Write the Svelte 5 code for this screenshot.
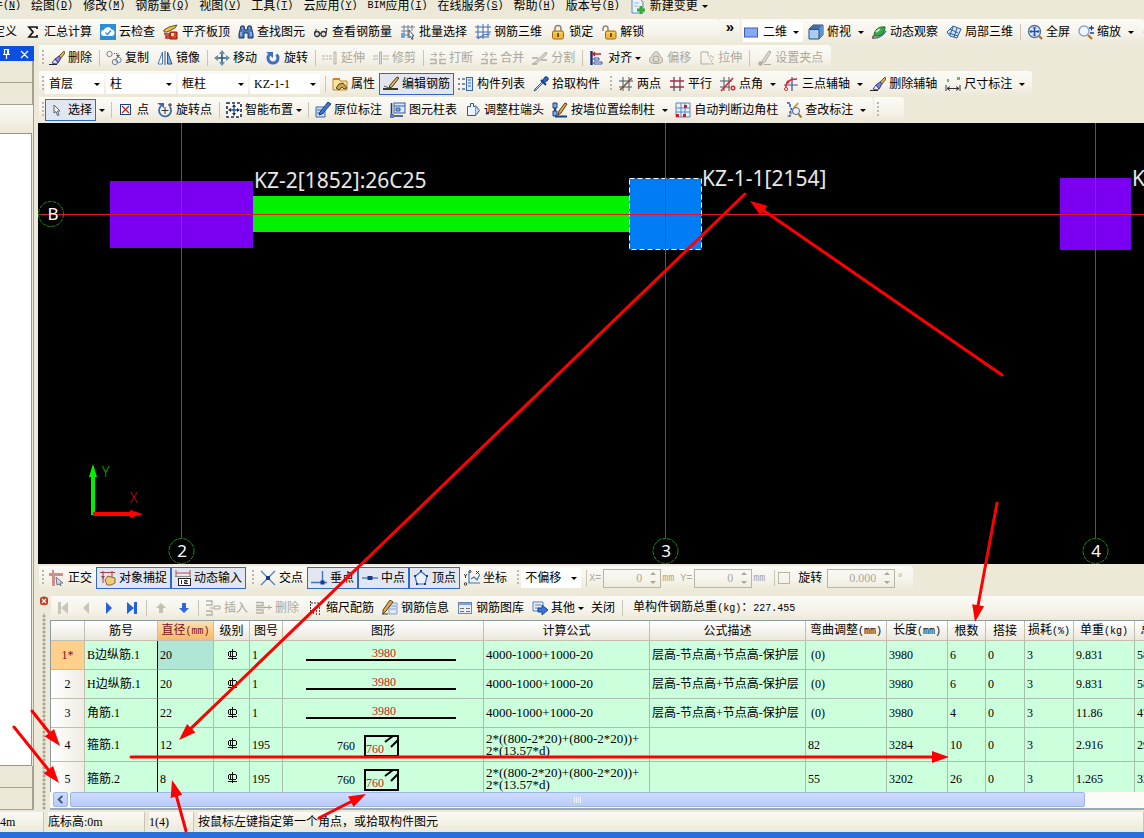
<script lang="ts">
  type Tool = {
    icon?: string;
    label?: string;
    title?: string;
    on?: boolean;
    off?: boolean;
    arrow?: 'menu' | 'split';
    sep?: boolean;
    grip?: boolean;
  };

  const sep: Tool = { sep: true };
  const grip: Tool = { grip: true };

  const menus = [
    ['', '构件', 'N'], ['', '绘图', 'D'], ['', '修改', 'M'], ['', '钢筋量', 'Q'],
    ['', '视图', 'V'], ['', '工具', 'T'], ['', '云应用', 'Y'], ['BIM', '应用', 'I'],
    ['', '在线服务', 'S'], ['', '帮助', 'H'], ['', '版本号', 'B']
  ];

  const mainTools: Tool[] = [
    { label: '定义' },
    { icon: 'sigma', label: '汇总计算' },
    { icon: 'cloud', label: '云检查' },
    { icon: 'slab', label: '平齐板顶' },
    { icon: 'binoculars', label: '查找图元' },
    { icon: 'glasses', label: '查看钢筋量' },
    { icon: 'batch', label: '批量选择' },
    { icon: 'mesh', label: '钢筋三维' },
    { icon: 'lock', label: '锁定' },
    { icon: 'unlock', label: '解锁' }
  ];

  const viewTools: Tool[] = [
    { icon: 'cube', label: '俯视', arrow: 'split' },
    { icon: 'orbit', label: '动态观察' },
    { icon: 'local3d', label: '局部三维' },
    sep,
    { icon: 'fit', label: '全屏' },
    { icon: 'zoom', label: '缩放', arrow: 'split' },
    { icon: 'hand', title: '平移' }
  ];

  const editTools: Tool[] = [
    { icon: 'brush', label: '删除' },
    sep,
    { icon: 'copy', label: '复制' },
    { icon: 'mirror', label: '镜像' },
    sep,
    { icon: 'move', label: '移动' },
    { icon: 'rotate', label: '旋转' },
    sep,
    { icon: 'extend', label: '延伸', off: true },
    { icon: 'trim', label: '修剪', off: true },
    sep,
    { icon: 'break', label: '打断', off: true },
    { icon: 'break', label: '合并', off: true },
    { icon: 'split', label: '分割', off: true },
    sep,
    { icon: 'align', label: '对齐', arrow: 'menu' },
    { icon: 'offset', label: '偏移', off: true },
    { icon: 'stretch', label: '拉伸', off: true },
    sep,
    { icon: 'grips', label: '设置夹点', off: true }
  ];

  const combos = [
    { name: '楼层', value: '首层', size: 'narrow' },
    { name: '构件类型', value: '柱', size: '' },
    { name: '构件种类', value: '框柱', size: '' },
    { name: '构件名称', value: 'KZ-1-1', size: '' }
  ];

  const memberTools: Tool[] = [
    sep,
    { icon: 'props', label: '属性' },
    { icon: 'editbar', label: '编辑钢筋', on: true },
    { icon: 'list', label: '构件列表' },
    { icon: 'picker', label: '拾取构件' },
    grip,
    { icon: 'twopt', label: '两点' },
    { icon: 'parallel', label: '平行' },
    { icon: 'angle', label: '点角', arrow: 'split' },
    { icon: 'threept', label: '三点辅轴', arrow: 'split' },
    { icon: 'brush', label: '删除辅轴' },
    { icon: 'dim', label: '尺寸标注', arrow: 'split' }
  ];

  const drawTools: Tool[] = [
    { icon: 'cursor', label: '选择', on: true, arrow: 'split' },
    sep,
    { icon: 'point', label: '点' },
    { icon: 'rotpoint', label: '旋转点' },
    sep,
    { icon: 'smart', label: '智能布置', arrow: 'menu' },
    sep,
    { icon: 'note', label: '原位标注' },
    { icon: 'coltable', label: '图元柱表' },
    { icon: 'colend', label: '调整柱端头' },
    { icon: 'bywall', label: '按墙位置绘制柱', arrow: 'split' },
    { icon: 'corner', label: '自动判断边角柱' },
    { icon: 'check', label: '查改标注', arrow: 'split' }
  ];

  const snapTools: Tool[] = [
    { icon: 'ortho', label: '正交' },
    { icon: 'snap', label: '对象捕捉', on: true },
    { icon: 'dyn', label: '动态输入', on: true },
    grip,
    { icon: 'cross', label: '交点' },
    { icon: 'perp', label: '垂点', on: true },
    { icon: 'mid', label: '中点', on: true },
    { icon: 'vertex', label: '顶点', on: true },
    { icon: 'coord', label: '坐标' },
    grip
  ];

  const rebarTools: Tool[] = [
    { icon: 'first', title: '首行', off: true },
    { icon: 'prev', title: '上一行', off: true },
    { icon: 'next', title: '下一行' },
    { icon: 'last', title: '末行' },
    sep,
    { icon: 'up', title: '上移', off: true },
    { icon: 'down', title: '下移' },
    sep,
    { icon: 'insert', label: '插入', off: true },
    { icon: 'remove', label: '删除', off: true },
    { icon: 'scale', label: '缩尺配筋' },
    { icon: 'info', label: '钢筋信息' },
    { icon: 'library', label: '钢筋图库' },
    { icon: 'other', label: '其他', arrow: 'menu' },
    { label: '关闭' },
    sep
  ];

  const columns = [
    { label: '', unit: '', cls: 'c-index' },
    { label: '筋号', unit: '', cls: 'c-name' },
    { label: '直径', unit: '(mm)', cls: 'c-dia' },
    { label: '级别', unit: '', cls: 'c-grade' },
    { label: '图号', unit: '', cls: 'c-fig' },
    { label: '图形', unit: '', cls: 'c-shape' },
    { label: '计算公式', unit: '', cls: 'c-formula' },
    { label: '公式描述', unit: '', cls: 'c-desc' },
    { label: '弯曲调整', unit: '(mm)', cls: 'c-bend' },
    { label: '长度', unit: '(mm)', cls: 'c-len' },
    { label: '根数', unit: '', cls: 'c-count' },
    { label: '搭接', unit: '', cls: 'c-lap' },
    { label: '损耗', unit: '(%)', cls: 'c-loss' },
    { label: '单重', unit: '(kg)', cls: 'c-weight' },
    { label: '总重', unit: '(kg)', cls: 'c-total' }
  ];

  const straight = '4000-1000+1000-20';
  const desc = '层高-节点高+节点高-保护层';
  const hoop = '2*((800-2*20)+(800-2*20))+\n2*(13.57*d)';

  const rows = [
    { name: 'B边纵筋.1', dia: 20, fig: 1, formula: straight, desc, bend: '(0)', len: 3980, count: 6, lap: 0, loss: 3, weight: '9.831', total: '58.986' },
    { name: 'H边纵筋.1', dia: 20, fig: 1, formula: straight, desc, bend: '(0)', len: 3980, count: 6, lap: 0, loss: 3, weight: '9.831', total: '58.986' },
    { name: '角筋.1', dia: 22, fig: 1, formula: straight, desc, bend: '(0)', len: 3980, count: 4, lap: 0, loss: 3, weight: '11.86', total: '47.44' },
    { name: '箍筋.1', dia: 12, fig: 195, formula: hoop, desc: '', bend: '82', len: 3284, count: 10, lap: 0, loss: 3, weight: '2.916', total: '29.16' },
    { name: '箍筋.2', dia: 8, fig: 195, formula: hoop, desc: '', bend: '55', len: 3202, count: 26, lap: 0, loss: 3, weight: '1.265', total: '32.89' }
  ];

  // start x, start y, tip x, tip y
  const marks = [
    [745, 194, 179, 740],
    [1002, 375, 750, 201],
    [997, 503, 975, 622],
    [32, 711, 60, 746],
    [14, 727, 59, 783],
    [131, 757, 949, 757],
    [186, 831, 172, 780],
    [319, 818, 366, 794]
  ];

  function head([x1, y1, x2, y2]: number[]) {
    const len = Math.hypot(x2 - x1, y2 - y1);
    const ux = (x2 - x1) / len;
    const uy = (y2 - y1) / len;
    const bx = x2 - ux * 17;
    const by = y2 - uy * 17;
    return {
      bx,
      by,
      points: `${x2},${y2} ${bx - uy * 6},${by + ux * 6} ${bx + uy * 6},${by - ux * 6}`
    };
  }

  // 16x16 toolbar glyphs
  const icons: Record<string, string> = {
    sigma: '<path d="M12 5V3H4l4 5-4 5h8v-2" fill="none" stroke="#111" stroke-width="1.7"/>',
    cloud: '<rect width="16" height="16" fill="#2b8fd8"/><path d="M4 12a3 3 0 0 1 0-6 4 4 0 0 1 7.500-.5A3.300 3.300 0 0 1 12 12z" fill="#fff"/><path d="M5.500 8.500l2 2 3.500-4" fill="none" stroke="#2b8fd8" stroke-width="1.300"/>',
    slab: '<path d="M1 6l5-3 8-2-2 3-8 4H1z" fill="#f4c24a" stroke="#6b4a10"/><path d="M1 10h6v2H3v2h4" fill="none" stroke="#b62020" stroke-width="1.500"/><path d="M7 8h7v7H7z" fill="#d9482a" stroke="#7c1d10"/><path d="M8 9h3v3H8z" fill="#ffe27a"/>',
    binoculars: '<path d="M3 2h3l1 4h2l1-4h3l2 8v4h-5V9H6v5H1v-4z" fill="#4f78bd" stroke="#1d3463"/><path d="M3 8v4M13 8v4M4 4h1M11 4h1" stroke="#c9dcff"/>',
    glasses: '<circle cx="4" cy="10" r="2.500" fill="#dfe6ee" stroke="#333" stroke-width="1.300"/><circle cx="10.500" cy="10" r="2.500" fill="#dfe6ee" stroke="#333" stroke-width="1.300"/><path d="M6.500 9.500h1.500M1.500 9l2-4M13 9.500l1-5h-2" stroke="#333" fill="none"/>',
    batch: '<path d="M1 3h14M1 7h9M1 11h8M4 1v13M8 1v13M12 1v6" stroke="#6d7f9a"/><rect x="1" y="9" width="4" height="5" fill="#6aa1e8"/><path d="M9 6l5 6-2 0 1 3-1 .5-1.500-3-1.500 1z" fill="#fff" stroke="#456"/>',
    mesh: '<path d="M0 3h16M0 8h16M1 13h13M3 1v14M8 0v15M13 0v13M3 15l5-4 7-1" stroke="#3f6db0" fill="none"/>',
    lock: '<path d="M5 8V4.500a3 3 0 0 1 6 0V8" fill="none" stroke="#8e8778" stroke-width="1.600"/><rect x="2.500" y="7" width="11" height="8" rx="1.500" fill="#f3b73a" stroke="#a06a10"/><path d="M4 9h8" stroke="#fbe09a"/><path d="M8 9v4" stroke="#5a3a05" stroke-width="1.600"/>',
    unlock: '<path d="M2 7V4.500a2.500 2.500 0 0 1 5 0V8" fill="none" stroke="#8e8778" stroke-width="1.500"/><rect x="4.500" y="7" width="10.500" height="8" rx="1.500" fill="#f3b73a" stroke="#a06a10"/><path d="M6 9h8" stroke="#fbe09a"/><path d="M10 9v4" stroke="#5a3a05" stroke-width="1.600"/>',
    cube: '<path d="M1 5l4-4h10v10l-4 4H1z" fill="#a9cdf2" stroke="#2c4f7c"/><path d="M1 5l4-4h10l-4 4z" fill="#3f6fa8"/><path d="M11 5l4-4v10l-4 4z" fill="#5f93cc"/><path d="M1.500 5.500h9.500v9.500" fill="none" stroke="#2c4f7c"/>',
    orbit: '<path d="M3 12C3 6 8 2 14 3c0 6-4 10-11 9z" fill="#35a845" stroke="#176a26"/><path d="M5 8l4-3" stroke="#c3f0b8" stroke-width="2"/><path d="M1 14c5 1 11-2 14-7" fill="none" stroke="#3a5c9a" stroke-width="1.300"/><path d="M2 15l2-4-3 1z" fill="#c23a2a"/>',
    local3d: '<path d="M1 8l6-6 8 3-4 9-7-2z" fill="#cfe4fa" stroke="#2d6096"/><path d="M4 5l8 4M7 3l-3 8M11 4l-3 9M3 9l9 3" stroke="#2d6096" fill="none"/>',
    fit: '<circle cx="7.500" cy="7.500" r="6" fill="#e4effc" stroke="#5b6f92" stroke-width="1.400"/><path d="M7.500 3v9M3 7.500h9" stroke="#1f4fb0" stroke-width="1.500"/><path d="M6 4.500L7.500 3 9 4.500M6 10.500L7.500 12 9 10.500M4.500 6L3 7.500 4.500 9M10.500 6L12 7.500 10.500 9" fill="none" stroke="#1f4fb0"/><path d="M12 12l3 3" stroke="#a8752c" stroke-width="2.400"/>',
    zoom: '<circle cx="6" cy="7" r="5" fill="#eef5fd" stroke="#8fa3bf" stroke-width="1.400"/><path d="M10 11l4 4" stroke="#b07a2c" stroke-width="2.400"/><path d="M11 4h5M13.500 1.500v5M12 9h4" stroke="#1b3f92" stroke-width="1.300"/>',
    hand: '<path d="M3 8l3-5 2 4 2-4 3 6-2 6H6z" fill="#f1cf98" stroke="#98835f"/>',
    brush: '<path d="M15 1l-5 5 2 2 4-5z" fill="#d7b25c" stroke="#6f5620"/><path d="M10 6l-4 3 3 4 3-5z" fill="#8080d8" stroke="#3b3b86"/><path d="M6 9l-3 4 4 1 2-1z" fill="#e4e4f4" stroke="#44447c"/><path d="M0 14.500h8" stroke="#223"/>',
    copy: '<circle cx="3.500" cy="4" r="2.700" fill="none" stroke="#778292"/><circle cx="9" cy="12" r="2.700" fill="none" stroke="#778292"/><circle cx="12.500" cy="10" r="2.700" fill="none" stroke="#5f82b8"/><path d="M8 3.500h4V6" fill="none" stroke="#556" stroke-dasharray="1 1"/><path d="M10 5h4l-2 2.500z" fill="#556"/>',
    mirror: '<path d="M5.500 2v12H1z" fill="#fff" stroke="#4a74b4"/><path d="M10.500 2v12H15z" fill="#86b0e8" stroke="#31588f"/><path d="M8 1v14" stroke="#31588f"/>',
    move: '<path d="M8 2v12M2 8h12" stroke="#2e5573" stroke-width="1.600"/><path d="M8 0l3 4H5zM8 16l3-4H5zM0 8l4-3v6zM16 8l-4-3v6z" fill="#5d8fb0"/>',
    rotate: '<path d="M4.500 4.500a5 5 0 1 0 7 0" fill="none" stroke="#3f70c8" stroke-width="3"/><path d="M1 2h7v6z" fill="#3f70c8"/>',
    extend: '<path d="M0 6h6M0 9h6M7 6h4M7 9h4" stroke="#b5b1a4" stroke-dasharray="3 1"/><path d="M12 2h2v12h-2z" fill="#eee" stroke="#b5b1a4"/>',
    trim: '<path d="M0 6h5M0 9h5M10 6h6M10 9h6" stroke="#b5b1a4"/><path d="M6.500 2h2v12h-2z" fill="#ddd" stroke="#b5b1a4"/>',
    break: '<path d="M0 9.500h6v4H0M16 9.500h-6v4h6" fill="none" stroke="#b5b1a4" stroke-width="1.500"/><path d="M1 4.500h5M4 2l3 2.500L4 7M15 4.500h-5M12 2L9 4.500 12 7" fill="none" stroke="#b5b1a4"/>',
    split: '<path d="M1 14L14 2l1 2L4 14z" fill="#ddd9cd" stroke="#b0ac9f"/><path d="M0 8h6M9 10h6M0 14h5" stroke="#b0ac9f" stroke-width="1.500"/>',
    align: '<path d="M2.500 1v14" stroke="#142c78" stroke-width="2.400"/><path d="M4 4h8M6 2L4 4l2 2" fill="none" stroke="#c01f2f" stroke-width="1.500"/><path d="M5 8h5v2H5zM5 12h8v2H5z" fill="#fff" stroke="#2c50a8"/>',
    offset: '<path d="M2 12c-2-4 2-5 3-8 2-3 5-3 6 0 1 3 5 4 3 8-1 2-11 2-12 0z" fill="#dedacd" stroke="#aaa698"/><circle cx="8" cy="9" r="3" fill="none" stroke="#aaa698"/>',
    stretch: '<path d="M2 2h7v3M2 2v12h7" fill="none" stroke="#b0ac9f"/><path d="M9 5l5 9M9 14h5M11 6h3v4" fill="none" stroke="#b0ac9f" stroke-dasharray="2 1"/>',
    grips: '<path d="M6 11l7-10 2 1-6 10-3 1z" fill="#ddd9cd" stroke="#b0ac9f"/><path d="M3 12h3v3H3zM8 14.500h7" fill="#b0ac9f" stroke="#b0ac9f"/>',
    props: '<path d="M1 3h6l1 2h7v9H1z" fill="#fbe3a0" stroke="#c08a2c"/><path d="M1 2h7v2H1z" fill="#e0792a"/><path d="M4 12l3-4 4-1 4 5-3 1-2-2-3 3z" fill="#c9a24e" stroke="#5c4716"/>',
    editbar: '<path d="M14 1l2 1-7 9-3 1 1-3z" fill="#e0b45a" stroke="#4c3a14"/><path d="M0 13h15" stroke="#222" stroke-width="1.800"/><path d="M1 10l5 2" stroke="#555"/>',
    list: '<path d="M0 3h2M0 8h2M0 13h2M4 3h3M4 8h3M4 13h3" stroke="#5a6c90" stroke-width="1.500"/><rect x="8.500" y="1.500" width="6" height="13" fill="#d8e8fb" stroke="#3d66a8"/><path d="M10 4h3M10 7h3M10 10h3" stroke="#3d66a8"/>',
    picker: '<path d="M9 5l3-4c2-1 4 1 3 3l-4 3z" fill="#2a67c8" stroke="#123a84"/><path d="M8 4l5 5" stroke="#123a84" stroke-width="2"/><path d="M9 6l-7 7-1 2 2-1 7-7z" fill="#bfe0ff" stroke="#2a5aa0"/>',
    twopt: '<path d="M1 5h14M1 11h13M5 1v14M11 1v14" stroke="#4c5564"/><path d="M2 14L14 2" stroke="#7a4e2c" stroke-width="1.400"/>',
    parallel: '<path d="M5 1v14M11 1v14" stroke="#4c5564" stroke-width="1.300"/><path d="M1 5h14M1 11h14" stroke="#b2294a" stroke-width="1.300"/>',
    angle: '<path d="M0 5h12M0 11h10M4 1v14M9 1v14" stroke="#4c5564"/><path d="M1 15L13 2" stroke="#d22a34" stroke-width="1.500"/><circle cx="13" cy="12" r="1.800" fill="none" stroke="#d22a34" stroke-width="1.400"/>',
    threept: '<path d="M1 9h14M9 1v14" stroke="#40549a" stroke-width="1.200"/><path d="M3 14C2 7 5 3 14 3" fill="none" stroke="#d22a34" stroke-width="1.500"/><circle cx="3" cy="13" r="1.500" fill="#fff" stroke="#d22a34"/><circle cx="5" cy="6" r="1.500" fill="#d22a34"/>',
    dim: '<path d="M1 9v6M15 9v6M2 12.500h12M5 10.500l-3 2 3 2M11 10.500l3 2-3 2" stroke="#333" fill="none"/><path d="M2 3h2v3H2zM12 1h3v3h-3z" fill="#6cb56c"/>',
    cursor: '<path d="M5 3l6 6H8.500l1.500 4-1.500.5L7 9.500 5 11z" fill="#fff" stroke="#59606c"/>',
    point: '<rect x="2.500" y="2.500" width="10" height="10" fill="#fff" stroke="#1c3f86"/><path d="M4 4l7 7M11 4l-7 7" stroke="#b02a2a" stroke-width="1.300"/>',
    rotpoint: '<path d="M4 4a6 6 0 1 0 9 1" fill="none" stroke="#3c6aa8" stroke-width="1.800"/><path d="M0 1h7v5z" fill="#3c6aa8"/><path d="M8 5v7M4.500 8.500h7" stroke="#333"/><path d="M13 1v4M11 3h4" stroke="#333"/>',
    smart: '<rect x="1" y="1" width="14" height="14" fill="#fff" stroke="#182c54" stroke-width="1.600" stroke-dasharray="3 2"/><path d="M8 4v8M4 8h8" stroke="#1f4fae" stroke-width="1.300"/><path d="M8 2l2 3H6zM8 14l2-3H6zM2 8l3-2v4zM14 8l-3-2v4z" fill="#182c54"/>',
    note: '<path d="M1 5h9v10H1z" fill="#cfe0f6" stroke="#3a66ac"/><path d="M2 8h7M2 11h7" stroke="#3a66ac"/><path d="M13 0l3 2-9 10-3 1 1-3z" fill="#3a78d0" stroke="#173c7c"/>',
    coltable: '<rect x="4" y="1" width="11" height="10" fill="#dbe8fa" stroke="#3a5f9e"/><path d="M4 4h11M6 6h4v3H6z" fill="#7ba6e4" stroke="#3a5f9e"/><path d="M1.500 1v13H13" fill="none" stroke="#223c6c" stroke-width="1.600"/><rect x="0" y="12" width="4" height="4" fill="#5d7fb4"/>',
    colend: '<path d="M2.500 4.500v9h8v-9h-2v-3h-3v3z" fill="#eef3fb" stroke="#34578f"/><path d="M10.500 3.500l4 5-4 5" fill="#c5d8f2" stroke="#34578f"/>',
    bywall: '<path d="M1 1h4v5H1zM1 9h4v5H1z" fill="#7ca7e8" stroke="#1d3f7c"/><path d="M3 14.500h12M3 6v3" stroke="#1d3f7c" stroke-width="2"/><path d="M13 1l2 1-6 9-3 2 1-4z" fill="#e0ae52" stroke="#4c3a14"/>',
    corner: '<path d="M1 1h14v14H1zM1 6h14M1 10h14M6 1v14M10 1v14" fill="#e9f1fc" stroke="#5d84bb"/><path d="M9 3h3v3H9zM1 12h3v3H1zM8 12h3v3H8z" fill="#c51f2c"/>',
    check: '<path d="M1 1h3v4l2 3-2 2v4H1" fill="none" stroke="#2757a8" stroke-width="1.500" stroke-dasharray="3 1"/><path d="M7 7l5-6M5 12l4-5" stroke="#c19544" stroke-width="1.800"/><circle cx="10" cy="9" r="3.500" fill="#e7f1fd" stroke="#4f6588"/><path d="M12.500 12l3 3.500" stroke="#a8752c" stroke-width="2"/>',
    ortho: '<path d="M0 3h14v3H6v10H3V6H0z" fill="#cf8f8f"/><path d="M4 0v3" stroke="#cf8f8f" stroke-width="2"/><path d="M7 7l7 6-3 0 1 3-2-2-2 1z" fill="#cfd8e4" stroke="#6c7888"/>',
    snap: '<path d="M0 2.500h15M3 1v12M12 1v6" stroke="#a04040"/><path d="M1 6l2 3 2-3z" fill="#a04040"/><path d="M5 10l3-4 3 1 4 1v5l-4 2H7z" fill="#f0cd7a" stroke="#8b6a28"/>',
    dyn: '<path d="M1 0v6M15 0v6M1 3h14" stroke="#b05050"/><path d="M0 6.500h16" stroke="#8a8a8a"/><rect x="3.500" y="8.500" width="12" height="7" fill="#fff" stroke="#222"/><path d="M6.500 10v4M9 10.500h3v1.500H9.500v1.500H13" fill="none" stroke="#222"/>',
    cross: '<path d="M1 1l14 14M15 1L1 15" stroke="#4a7ac0" stroke-width="1.200"/><rect x="6" y="6" width="4" height="4" fill="#153a86"/>',
    perp: '<path d="M0 12.500h16M11.500 1v12" stroke="#3f74c0" stroke-width="1.400"/><rect x="9.500" y="10.500" width="4" height="4" fill="#153a86"/>',
    mid: '<path d="M0 8h16" stroke="#3f74c0" stroke-width="1.300"/><rect x="5.500" y="6" width="5" height="4" fill="#153a86"/>',
    vertex: '<path d="M8 1.500l6 5L12 14H4L2 6.500z" fill="#e9f1fc" stroke="#3f6db8" stroke-width="1.200"/><path d="M7 0h2v2H7zM13 5h2v2h-2zM1 5h2v2H1zM3 13h2v2H3zM11 13h2v2h-2z" fill="#153a86"/>',
    coord: '<path d="M5 2v11h11M7 9l3-2 3 3 3-6" fill="none" stroke="#3f74c0" stroke-width="1.200"/><path d="M0 4l1.500 2L3 4M1.500 6v2M12 1l3 3M15 1l-3 3" stroke="#333" fill="none"/><circle cx="1.500" cy="14" r="1.300" fill="none" stroke="#333"/><circle cx="6" cy="1.500" r="1" fill="none" stroke="#333"/>',
    first: '<path d="M3 2h3v12H3zM13 2v12L6 8z" fill="#c9c5b8"/>',
    prev: '<path d="M11 2v12L5 8z" fill="#c9c5b8"/>',
    next: '<path d="M5 2v12l6-6z" fill="#2560dc"/>',
    last: '<path d="M3 2v12l7-6zM10 2h3v12h-3z" fill="#2560dc"/>',
    up: '<path d="M8 3l5 5h-3v5H6V8H3z" fill="#c3bfb2"/>',
    down: '<path d="M8 13L3 8h3V3h4v5h3z" fill="#2f68dc"/>',
    insert: '<path d="M1 1h6v4H1M1 11h6v4H1" fill="none" stroke="#b5b1a4" stroke-width="1.300"/><path d="M5 8h3M9 6h6v3H9z" fill="none" stroke="#aaa698"/>',
    remove: '<path d="M0 2.500h7v3H0M0 7.500h10M0 10h7v3H0" fill="none" stroke="#b5b1a4" stroke-width="1.300"/><path d="M8 7.500h8M13 5v5" stroke="#aaa698"/>',
    scale: '<path d="M3.500 1v13M4 3h9" stroke="#333" stroke-dasharray="2 1" fill="none"/><path d="M6.500 9v6M9.500 7v8M12.500 4v11" stroke="#b22b3c" stroke-dasharray="2 1"/>',
    info: '<path d="M7 3h8v11H7z" fill="#dce9fa" stroke="#7f9fce"/><path d="M8 6h6M8 9h6" stroke="#7f9fce"/><path d="M8 0l3 2-7 9-3 3v-4z" fill="#dba958" stroke="#5a4216"/><path d="M0 14h6" stroke="#333"/>',
    library: '<rect x="1.500" y="2.500" width="13" height="11" fill="#e5effb" stroke="#6d87ae"/><path d="M2 4h12" stroke="#7fa3da" stroke-width="2"/><path d="M3 8.500h4M9 8.500h4M3 11.500h4M9 11.500h4" stroke="#76705c"/>',
    other: '<path d="M1 2h10v9H1z" fill="#e8f0fa" stroke="#5b7fb4"/><path d="M3 5h6M3 8h4" stroke="#5b7fb4"/><path d="M6 8h4V5l6 5-6 5v-3H6z" fill="#3a74d8" stroke="#1c4690"/>',
    newdoc: '<path d="M2 1h8l3 3v11H2z" fill="#eaf3fd" stroke="#5b86c0"/><path d="M4 5h5M4 8h4" stroke="#9db8dc"/><path d="M11 8v8M7 12h8" stroke="#3aa832" stroke-width="3"/>'
  };
</script>

{#snippet glyph(name: string)}
  <svg class="glyph" viewBox="0 0 16 16" aria-hidden="true">{@html icons[name]}</svg>
{/snippet}

{#snippet tools(items: Tool[])}
  {#each items as t}
    {#if t.sep}
      <span class="sep"></span>
    {:else if t.grip}
      <span class="grip grip--mid"></span>
    {:else}
      <button class="tool" class:tool--on={t.on} class:tool--bare={!t.label} disabled={t.off} aria-label={t.label ?? t.title}>
        {#if t.icon}{@render glyph(t.icon)}{/if}
        {#if t.label}<span>{t.label}</span>{/if}
        {#if t.arrow === 'menu'}<i class="arrow"></i>{/if}
      </button>
      {#if t.arrow === 'split'}
        <button class="drop" aria-label={t.label + '选项'}><i class="arrow"></i></button>
      {/if}
    {/if}
  {/each}
{/snippet}

{#snippet combo(name: string, value: string, size: string)}
  <span class="combo {size}">
    <select aria-label={name}><option>{value}</option></select>
    <i class="arrow"></i>
  </span>
{/snippet}

{#snippet spin(id: string, value: string, size: string)}
  <span class="spin {size}">
    <input {id} type="text" {value} disabled />
    <span class="spin__keys"><i class="arrow arrow--up"></i><i class="arrow"></i></span>
  </span>
{/snippet}

<div class="app">
  <nav class="menu">
    {#each menus as [latin, label, key]}
      <button class="menu__item">{#if latin}<span class="latin">{latin}</span>{/if}{label}<span class="latin">(<u>{key}</u>)</span></button>
    {/each}
    <button class="menu__item menu__item--new">
      {@render glyph('newdoc')}<span>新建变更</span><i class="arrow"></i>
    </button>
  </nav>

  <div class="top">
    <div class="strip strip--cut">{@render tools(mainTools)}</div>
    <button class="more" aria-label="更多">»</button>
    <div class="strip strip--view">
      <span class="combo combo--view">
        <svg class="glyph" viewBox="0 0 16 16" aria-hidden="true"><rect x="1.500" y="4" width="13" height="9" fill="#86a9f0" stroke="#3a5fb8" /></svg>
        <select aria-label="视图模式"><option>二维</option></select>
        <i class="arrow"></i>
      </span>
      {@render tools(viewTools)}
    </div>
  </div>

  <div class="body">
    <aside class="dock">
      <header class="dock__title">
        <svg viewBox="0 0 34 15" aria-hidden="true">
          <path d="M4.500 3.500h4v5h-4zM3 8.500h7M6.500 9v4M7.500 4v4M21 5l7 7M28 5l-7 7" fill="none" stroke="#fff" stroke-width="1.200" />
        </svg>
      </header>
      <div class="dock__tab"></div>
      <div class="dock__tab"></div>
      <div class="dock__bar"></div>
      <div class="dock__page"></div>
      <div class="dock__tab"></div>
      <div class="dock__tab"></div>
    </aside>

    <main class="work">
      <div class="strip"><span class="grip"></span>{@render tools(editTools)}</div>
      <div class="strip">
        <span class="grip"></span>
        {#each combos as c}{@render combo(c.name, c.value, c.size)}{/each}
        {@render tools(memberTools)}
      </div>
      <div class="pair">
        <div class="strip"><span class="grip"></span>{@render tools(drawTools)}</div>
        <div class="strip strip--stub"><span class="grip"></span></div>
      </div>

      <div class="canvas">
        <svg width="100%" height="100%">
          <rect x="72" y="58" width="143" height="67" fill="#7b00f2" />
          <rect x="215" y="73" width="377" height="36" fill="#00f200" />
          <rect x="591.5" y="55.5" width="72" height="71" fill="#007cf4" stroke="#fff" stroke-dasharray="5 3" />
          <rect x="1022" y="55" width="71" height="72" fill="#7b00f2" />
          <path d="M0 91.500H2000M143.500 0V415M627.500 0V415M1057.500 0V415" stroke="#e01a1a" fill="none" />
          <g fill="none" stroke="#1c8c1c" stroke-dasharray="4 1">
            <circle cx="13" cy="91" r="12.500" />
            <circle cx="143.500" cy="428" r="12.500" />
            <circle cx="627.500" cy="428" r="12.500" />
            <circle cx="1057.500" cy="428" r="12.500" />
          </g>
          <g class="canvas__axis">
            <text x="15" y="97">B</text>
            <text x="144" y="434">2</text>
            <text x="628" y="434">3</text>
            <text x="1058" y="434">4</text>
          </g>
          <g class="canvas__label">
            <text x="216" y="65">KZ-2[1852]:26C25</text>
            <text x="664" y="63">KZ-1-1[2154]</text>
            <text x="1094" y="63">KZ-1</text>
          </g>
          <path d="M55 392V352" stroke="#00f000" stroke-width="4" />
          <path d="M55 341l4 13h-8z" fill="#00f000" />
          <path d="M55 391H94" stroke="#f00" stroke-width="4" />
          <path d="M105 391l-13 4v-8z" fill="#f00" />
          <text class="canvas__dir" x="64" y="354" fill="#00c800">Y</text>
          <text class="canvas__dir" x="92" y="380" fill="#e01010">X</text>
        </svg>
      </div>

      <div class="strip strip--snap">
        <span class="grip"></span>
        {@render tools(snapTools)}
        {@render combo('偏移方式', '不偏移', 'combo--snap')}
        <span class="sep"></span>
        <label class="axis" for="dx">X=</label>{@render spin('dx', '0', '')}<span class="axis axis--unit">mm</span>
        <label class="axis" for="dy">Y=</label>{@render spin('dy', '0', '')}<span class="axis axis--unit">mm</span>
        <span class="sep"></span>
        <label class="turn"><input type="checkbox" />旋转</label>
        {@render spin('turn', '0.000', 'spin--wide')}<label class="axis" for="turn">°</label>
      </div>

      <section class="pane">
        <div class="pane__edge">
          <button class="pane__close" aria-label="关闭面板">
            <svg viewBox="0 0 8 8" aria-hidden="true"><path d="M2 2l4 4M6 2L2 6" stroke="#fff" stroke-width="1.200" /></svg>
          </button>
        </div>
        <div class="pane__main">
          <div class="strip strip--cmd">
            {@render tools(rebarTools)}
            <span class="sum">单构件钢筋总重<span class="latin">(kg)</span>：<span class="latin">227.455</span></span>
          </div>

          <div class="sheet">
            <table>
              <colgroup>
                {#each columns as c}<col class={c.cls} />{/each}
              </colgroup>
              <thead>
                <tr>
                  {#each columns as c, i}
                    <th scope="col" class:picked={i === 2}>{c.label}{#if c.unit}<span class="latin">{c.unit}</span>{/if}</th>
                  {/each}
                </tr>
              </thead>
              <tbody>
                {#each rows as r, i}
                  <tr class:tall={r.fig === 195}>
                    <th scope="row" class:current={i === 0}>{i + 1}{i === 0 ? '*' : ''}</th>
                    <td class="name">{r.name}</td>
                    <td class:active={i === 0}>{r.dia}</td>
                    <td class="grade">
                      <svg viewBox="0 0 11 11" aria-label="HRB400"><path d="M5.500 0v11M2 2.500h7M1.500 3v4M9.500 3v4M3.500 3v4M2 7.500h7M1 9.500h9" fill="none" stroke="#111" /></svg>
                    </td>
                    <td>{r.fig}</td>
                    <td class="shape">
                      {#if r.fig === 1}
                        <svg width="200" height="28">
                          <path d="M23 19H173" stroke="#000" stroke-width="2" />
                          <text x="101" y="16" text-anchor="middle" fill="#d01818">3980</text>
                        </svg>
                      {:else}
                        <svg width="200" height="32">
                          <rect x="82" y="7" width="33" height="20" fill="none" stroke="#000" stroke-width="2" />
                          <path d="M102 13l8-6M108 18l7-7" stroke="#000" stroke-width="2" />
                          <text x="54" y="21">760</text>
                          <text x="83" y="24" fill="#d01818">760</text>
                        </svg>
                      {/if}
                    </td>
                    <td class="formula">{r.formula}</td>
                    <td>{r.desc}</td>
                    <td class:inset={r.fig === 1}>{r.bend}</td>
                    <td>{r.len}</td>
                    <td>{r.count}</td>
                    <td>{r.lap}</td>
                    <td>{r.loss}</td>
                    <td>{r.weight}</td>
                    <td>{r.total}</td>
                  </tr>
                {/each}
              </tbody>
            </table>
          </div>

          <div class="scroll">
            <button class="scroll__key" aria-label="向左滚动">
              <svg viewBox="0 0 14 14" aria-hidden="true"><path d="M9 3L5 7l4 4" fill="none" stroke="#3a5585" stroke-width="2" /></svg>
            </button>
            <div class="scroll__thumb"><i></i><i></i><i></i><i></i></div>
          </div>
        </div>
      </section>
    </main>
  </div>

  <footer class="status">
    <span class="status__z">4m</span>
    <span class="status__base">底标高:0m</span>
    <span class="status__count">1(4)</span>
    <span class="status__hint">按鼠标左键指定第一个角点，或拾取构件图元</span>
  </footer>

  <svg class="marks" aria-hidden="true">
    {#each marks as m}
      {@const h = head(m)}
      <line x1={m[0]} y1={m[1]} x2={h.bx} y2={h.by} />
      <polygon points={h.points} />
    {/each}
  </svg>
</div>

<style>
  :global(body) {
    margin: 0;
    background: #ece9d8;
  }

  .app {
    position: relative;
    display: flex;
    flex-direction: column;
    min-height: 100vh;
    overflow: hidden;
    background: #ece9d8;
    color: #000;
    font-family: "Liberation Serif", "Noto Sans CJK SC", serif;
    font-size: 12px;
    line-height: 16px;
    white-space: nowrap;
  }

  button,
  select,
  input {
    margin: 0;
    padding: 0;
    border: 0;
    background: none;
    color: inherit;
    font: inherit;
    box-sizing: border-box;
  }

  .latin {
    font-family: "Liberation Mono", monospace;
    font-size: 10px;
  }

  .glyph {
    display: block;
    flex: none;
    width: 16px;
    height: 16px;
  }

  .arrow {
    flex: none;
    width: 0;
    height: 0;
    border: 3px solid transparent;
    border-top-color: currentColor;
    border-bottom: 0;
  }

  .arrow--up {
    border-top: 0;
    border-bottom: 3px solid currentColor;
  }

  /* menu bar */
  .menu {
    display: flex;
    gap: 10px;
    height: 19px;
    margin-left: -21px;
    line-height: 12px;
  }

  .menu__item {
    display: flex;
    flex: none;
    align-items: center;
    height: 12px;
  }

  .menu__item--new {
    gap: 4px;
  }

  /* toolbars */
  .top {
    display: flex;
    align-items: flex-start;
    height: 26px;
  }

  .strip {
    display: flex;
    align-items: center;
    align-self: flex-start;
    flex: none;
    box-sizing: border-box;
    height: 24px;
    margin: 0 0 2px 1px;
    padding: 2px 4px 0 0;
    border-radius: 0 3px 3px 0;
    background: linear-gradient(#fbfaf6, #f5f3ea 60%, #ece9d8);
  }

  .strip--cut {
    flex: 1;
    margin-left: -11px;
  }

  .strip--view {
    flex: 0 0 403px;
    padding: 2px 0 0 2px;
    overflow: hidden;
  }

  .strip--stub {
    width: 30px;
  }

  .strip--snap {
    margin: 2px 0 6px 1px;
    padding: 0 8px 0 0;
  }

  .pair {
    display: flex;
  }

  .more {
    align-self: stretch;
    flex: none;
    width: 20px;
    padding-bottom: 10px;
    background: linear-gradient(#fbfaf6, #ece9d8);
    font-family: "Liberation Sans", sans-serif;
    font-size: 15px;
    font-weight: bold;
    line-height: 14px;
  }

  .tool {
    display: flex;
    align-items: center;
    flex: none;
    gap: 3px;
    height: 22px;
    padding: 0 4px;
  }

  .tool--bare {
    width: 23px;
  }

  .tool--on {
    padding: 0 3px;
    border: 1px solid #316ac5;
    background: #e1e6f0;
  }

  .tool:disabled {
    color: #aca899;
  }

  .tool .arrow {
    margin-right: -1px;
  }

  .drop {
    display: flex;
    align-items: center;
    justify-content: center;
    flex: none;
    width: 12px;
    height: 22px;
  }

  .sep {
    flex: none;
    width: 1px;
    height: 16px;
    margin: 0 2px 0 3px;
    background: #c9c5b4;
  }

  .grip {
    flex: none;
    width: 2px;
    height: 16px;
    margin: 0 1px 0 3px;
    background: repeating-linear-gradient(#bdb9a8 0 2px, transparent 2px 4px);
  }

  .grip--mid {
    margin: 0 2px 0 6px;
  }

  .combo {
    position: relative;
    display: flex;
    align-items: center;
    flex: none;
    width: 70px;
    height: 20px;
    margin-right: 2px;
    background: #fff;
  }

  .combo.narrow {
    width: 59px;
  }

  .combo--snap {
    width: 60px;
  }

  .combo--view {
    width: 60px;
    margin-right: 1px;
  }

  .combo select {
    flex: 1;
    min-width: 0;
    height: 20px;
    padding-left: 4px;
    appearance: none;
    outline: 0;
  }

  .combo .arrow {
    position: absolute;
    right: 4px;
    top: 9px;
    pointer-events: none;
  }

  .axis {
    padding: 2px 2px 0 0;
    color: #aca899;
    font-family: "Liberation Mono", monospace;
    font-size: 10px;
  }

  .axis--unit {
    padding: 2px 6px 0 1px;
  }

  .spin {
    display: flex;
    align-items: center;
    flex: none;
    box-sizing: border-box;
    width: 58px;
    height: 19px;
    border: 1px solid #b9b5a5;
    color: #aca899;
  }

  .spin--wide {
    width: 68px;
    margin-right: 2px;
  }

  .spin input {
    flex: 1;
    min-width: 0;
    padding-right: 8px;
    text-align: right;
  }

  .spin__keys {
    display: grid;
    gap: 6px;
    width: 10px;
  }

  .turn {
    display: flex;
    align-items: center;
    gap: 8px;
    padding: 0 5px 0 1px;
  }

  .turn input {
    width: 12px;
    height: 12px;
    border: 1px solid #b9b5a5;
    appearance: none;
  }

  /* docked panel at the left */
  .body {
    display: flex;
    flex: 1;
  }

  .dock {
    display: flex;
    flex-direction: column;
    flex: none;
    box-sizing: border-box;
    width: 34px;
    margin: 1px 4px 2px 0;
    border-right: 1px solid #a5a192;
  }

  .dock__title {
    height: 15px;
    margin-right: -1px;
    background: #0a50e0;
  }

  .dock__title svg {
    display: block;
    width: 34px;
    height: 15px;
  }

  .dock__tab {
    height: 21px;
    border: 1px solid #a5a192;
    border-width: 0 1px 1px 0;
  }

  .dock__bar {
    height: 28px;
    background: linear-gradient(#fbfaf6, #ece9d8);
  }

  .dock__page {
    flex: 1;
    margin-right: 1px;
    border: 1px solid #8797a5;
    border-left: 0;
    background: #fff;
  }

  .work {
    display: flex;
    flex-direction: column;
    flex: 1;
    min-width: 0;
  }

  /* drawing area */
  .canvas {
    position: relative;
    flex: 1;
    min-height: 440px;
    background: #000;
    overflow: hidden;
  }

  .canvas svg {
    position: absolute;
    inset: 0;
  }

  .canvas__label {
    fill: #e8e8e8;
    font: 21px "Noto Sans", sans-serif;
  }

  .canvas__axis {
    fill: #fff;
    font: 17px "Noto Sans", sans-serif;
    text-anchor: middle;
  }

  .canvas__dir {
    font: 14px "Open Sans", sans-serif;
    font-weight: 300;
  }

  /* rebar pane */
  .pane {
    display: flex;
    margin-bottom: 2px;
  }

  .pane__edge {
    flex: none;
    width: 12px;
    background: radial-gradient(circle at 6px 2px, #aaa696 1px, transparent 2px) 0 14px / 12px 4px repeat-y;
  }

  .pane__close {
    display: block;
    width: 8px;
    height: 8px;
    margin: 1px 0 0 2px;
    border-radius: 2px;
    background: #cc3a22;
    box-shadow: 0 6px 0 2px #ece9d8;
  }

  .pane__close svg {
    display: block;
  }

  .pane__main {
    flex: 1;
    min-width: 0;
    border-bottom: 2px solid #9aabb8;
  }

  .strip--cmd {
    margin-bottom: 0;
    padding-top: 0;
    border-radius: 0;
  }

  .sum {
    padding-left: 8px;
  }

  .sheet {
    height: 171px;
    border: 1px solid #8d9a9e;
    border-width: 1px 0 0 1px;
    overflow: hidden;
  }

  table {
    width: 1144px;
    border-collapse: separate;
    border-spacing: 0;
    table-layout: fixed;
  }

  th,
  td {
    box-sizing: border-box;
    height: 29px;
    padding: 0 0 0 2px;
    border: 1px solid #a8bfae;
    border-width: 0 1px 1px 0;
    font-weight: normal;
    line-height: 12px;
    text-align: left;
    overflow: hidden;
  }

  td {
    background: #ccffdc;
  }

  th {
    padding: 0;
    border-color: #c3bfb0;
    background: linear-gradient(#fff, #ebe8dc);
    text-align: center;
  }

  thead th {
    height: 20px;
  }

  .tall th,
  .tall td {
    height: 34px;
  }

  tbody th {
    padding-right: 4px;
    padding-left: 4px;
    background: linear-gradient(90deg, #fff, #efece2);
  }

  th.current {
    background: #ffd08a;
    color: #7a1020;
  }

  th.picked {
    background: linear-gradient(#fde0b0, #f7b968);
    color: #7a1020;
  }

  td.name {
    border-right-color: #000;
  }

  td.active {
    background: #b0e6d6;
  }

  td.grade {
    text-align: center;
  }

  td.grade svg {
    width: 11px;
    height: 11px;
  }

  td.shape {
    padding: 0;
  }

  td.shape svg {
    display: block;
  }

  td.formula {
    font-size: 13px;
    white-space: pre;
  }

  td.inset {
    padding-left: 5px;
  }

  .c-index { width: 34px; }
  .c-name { width: 73px; }
  .c-dia { width: 56px; }
  .c-grade { width: 36px; }
  .c-fig { width: 33px; }
  .c-shape { width: 201px; }
  .c-formula { width: 166px; }
  .c-desc { width: 156px; }
  .c-bend { width: 81px; }
  .c-len { width: 61px; }
  .c-count { width: 38px; }
  .c-lap { width: 39px; }
  .c-loss { width: 49px; }
  .c-weight { width: 61px; }
  .c-total { width: 60px; }

  .scroll {
    display: flex;
    gap: 2px;
    height: 16px;
    padding-left: 3px;
    background: #fbfaf7;
  }

  .scroll__key,
  .scroll__thumb {
    box-sizing: border-box;
    height: 15px;
    border: 1px solid #9db4e6;
    border-radius: 2px;
    background: linear-gradient(#cfdcfe, #b9cbf8);
  }

  .scroll__key {
    width: 15px;
  }

  .scroll__key svg {
    display: block;
  }

  .scroll__thumb {
    display: flex;
    align-items: center;
    justify-content: center;
    gap: 1px;
    width: 93%;
  }

  .scroll__thumb i {
    width: 1px;
    height: 6px;
    background: #eef4fe;
  }

  /* status bar */
  .status {
    display: flex;
    gap: 4px;
    height: 20px;
    border-bottom: 6px solid #2a6fd8;
    line-height: 20px;
  }

  .status span {
    box-sizing: border-box;
    border-right: 1px solid #c9c5b4;
    background: linear-gradient(#fbf9f5, #ece9d8);
  }

  .status__z {
    width: 44px;
  }

  .status__base {
    width: 97px;
  }

  .status__count {
    width: 45px;
  }

  .status__hint {
    flex: 1;
  }

  .marks {
    position: absolute;
    inset: 0;
    width: 100%;
    height: 100%;
    pointer-events: none;
  }

  .marks line {
    stroke: #f00;
    stroke-width: 3;
    stroke-linecap: round;
  }

  .marks polygon {
    fill: #f00;
  }
</style>
